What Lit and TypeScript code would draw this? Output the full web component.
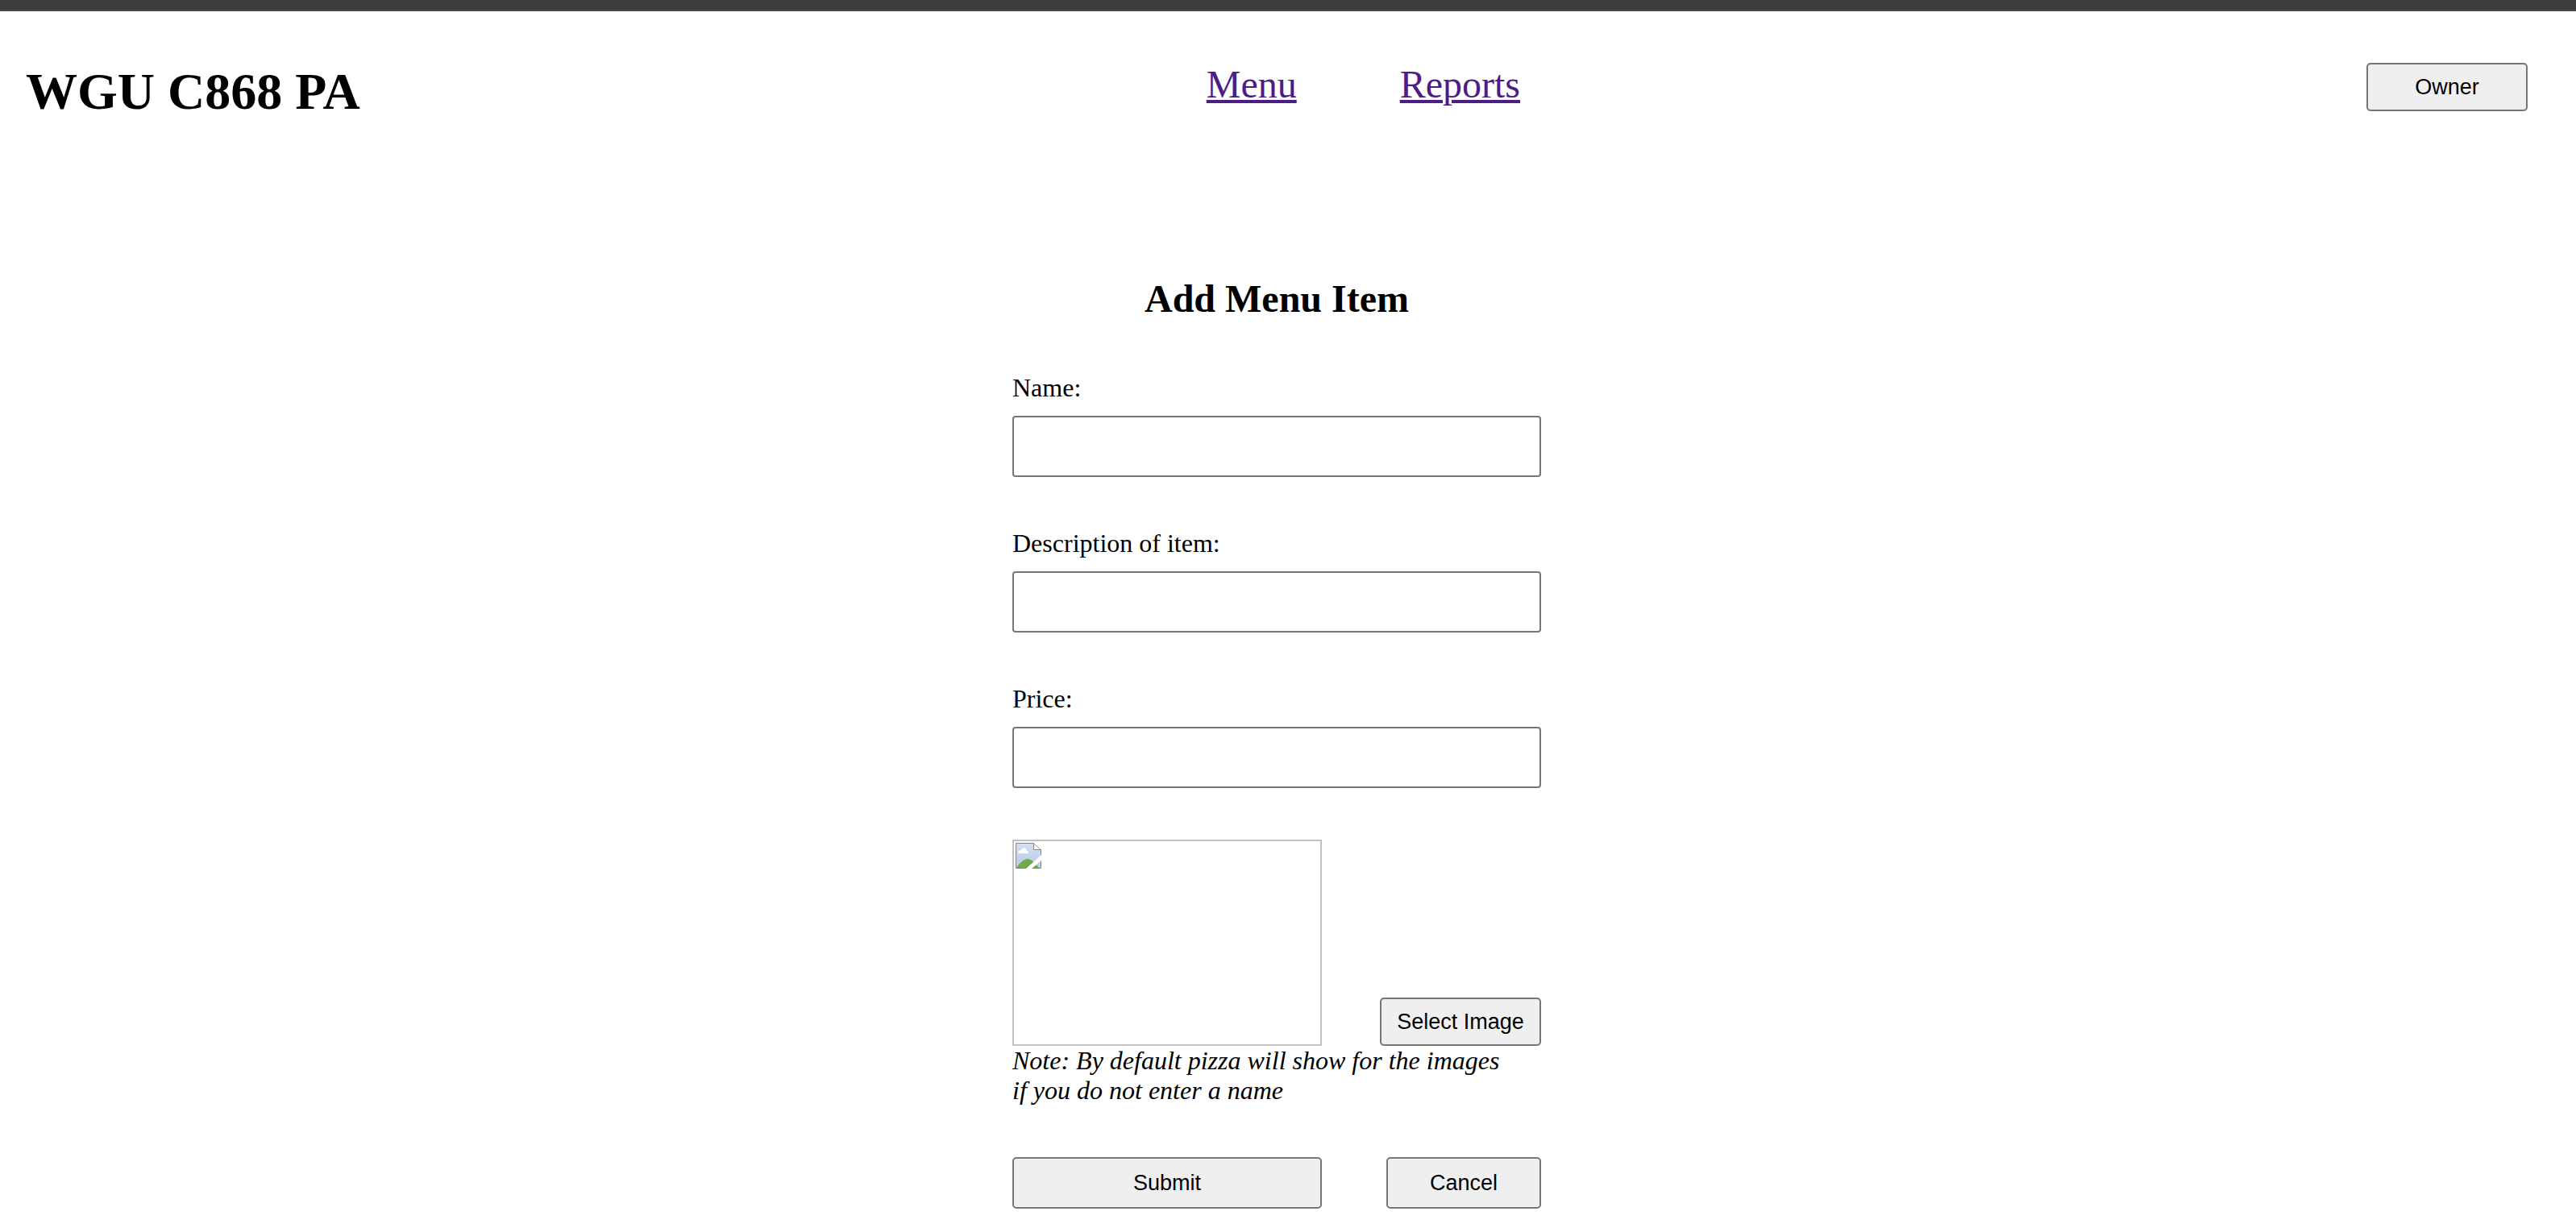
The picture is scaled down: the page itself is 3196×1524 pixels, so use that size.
import { LitElement, html, css, svg } from "lit";
import { customElement } from "lit/decorators.js";

interface Field {
  id: string;
  label: string;
}

const FIELDS: Field[] = [
  { id: "name", label: "Name:" },
  { id: "description", label: "Description of item:" },
  { id: "price", label: "Price:" },
];

const missingImage = svg`
  <svg class="missing" viewBox="0 0 32 32" aria-hidden="true">
    <defs>
      <linearGradient id="sky" x1="0" y1="0" x2="0" y2="1">
        <stop offset="0" stop-color="#d3e0f8" />
        <stop offset="1" stop-color="#b9c7e8" />
      </linearGradient>
    </defs>
    <path d="M0 0H22L32 9V32H0Z" fill="url(#sky)" />
    <path d="M1 31C6 24 10 20 15 20C20 20 24 25 29 31Z" fill="#6dac4a" />
    <path d="M3 13C3 10 5 9 7 9C8 5 13 5 14 10C16 10 16 12 16 13Z" fill="#fff" />
    <path d="M22 1V8H31Z" fill="#fff" />
    <path d="M31.5 8V31.5H0.5V0.5H22" fill="none" stroke="#858585" />
    <path d="M22.5 0.5V8.5H31.5" fill="none" stroke="#858585" />
    <path d="M22 0.5L31.5 8.5" fill="none" stroke="#9c9c9c" />
    <path d="M13 32L32 15V22L20 32Z" fill="#fff" />
  </svg>
`;

@customElement("app-root")
export class AppRoot extends LitElement {
  static styles = css`
    :host {
      display: block;
      background: #fff;
      color: #000;
      font-family: "Liberation Serif", "Times New Roman", serif;
      font-size: 32px;
      line-height: 37px;
    }
    * {
      box-sizing: border-box;
    }
    .topbar {
      height: 14px;
      background: #3c3c3c;
      border-bottom: 2px solid #474747;
    }
    .page {
      padding: 64px 60px 24px 32px;
    }
    .header {
      display: flex;
      align-items: flex-start;
      justify-content: space-between;
    }
    .title {
      margin: 0;
      font-size: 64px;
      line-height: 72px;
    }
    .nav {
      display: flex;
      gap: 128px;
      font-size: 48px;
      line-height: 54px;
    }
    .link {
      color: #4e1c86;
      text-decoration-thickness: 4px;
      text-underline-offset: 3px;
    }
    .button {
      height: 60px;
      width: 200px;
      padding: 0;
      border: 2px solid #767676;
      border-radius: 5px;
      background: #efefef;
      color: #000;
      font-family: "Liberation Sans", Arial, sans-serif;
      font-size: 27px;
    }
    .form {
      display: flex;
      flex-direction: column;
      gap: 64px;
      width: 656px;
      max-width: 100%;
      margin: 193px auto 0;
    }
    .heading {
      margin: 0;
      font-size: 48px;
      line-height: 56px;
      text-align: center;
    }
    .field {
      display: flex;
      flex-direction: column;
      gap: 16px;
    }
    .input {
      width: 100%;
      height: 76px;
      padding: 2px 4px;
      border: 2px solid #767676;
      border-radius: 4px;
      background: #fff;
      font-family: "Liberation Sans", Arial, sans-serif;
      font-size: 27px;
    }
    .row {
      display: flex;
      align-items: flex-end;
      justify-content: space-between;
    }
    .preview {
      width: 384px;
      height: 256px;
      padding: 2px;
      border: 2px solid #c0c0c0;
    }
    .missing {
      display: block;
      width: 32px;
      height: 32px;
    }
    .note {
      margin: 0;
      font-style: italic;
    }
    .submit {
      width: 384px;
      height: 64px;
    }
    .cancel {
      width: 192px;
      height: 64px;
    }
  `;

  render() {
    return html`
      <div class="topbar"></div>
      <div class="page">
        <header class="header">
          <h1 class="title">WGU C868 PA</h1>
          <nav class="nav">
            <a class="link" href="#menu">Menu</a>
            <a class="link" href="#reports">Reports</a>
          </nav>
          <button class="button" type="button">Owner</button>
        </header>
        <form class="form" @submit=${(e: Event) => e.preventDefault()}>
          <h2 class="heading">Add Menu Item</h2>
          ${FIELDS.map(
            (f) => html`
              <div class="field">
                <label for=${f.id}>${f.label}</label>
                <input class="input" id=${f.id} name=${f.id} type="text" />
              </div>
            `
          )}
          <div>
            <div class="row">
              <div class="preview">${missingImage}</div>
              <button class="button" type="button">Select Image</button>
            </div>
            <p class="note">
              Note: By default pizza will show for the images<br />if you do not enter a name
            </p>
          </div>
          <div class="row">
            <button class="button submit" type="submit">Submit</button>
            <button class="button cancel" type="button">Cancel</button>
          </div>
        </form>
      </div>
    `;
  }
}
